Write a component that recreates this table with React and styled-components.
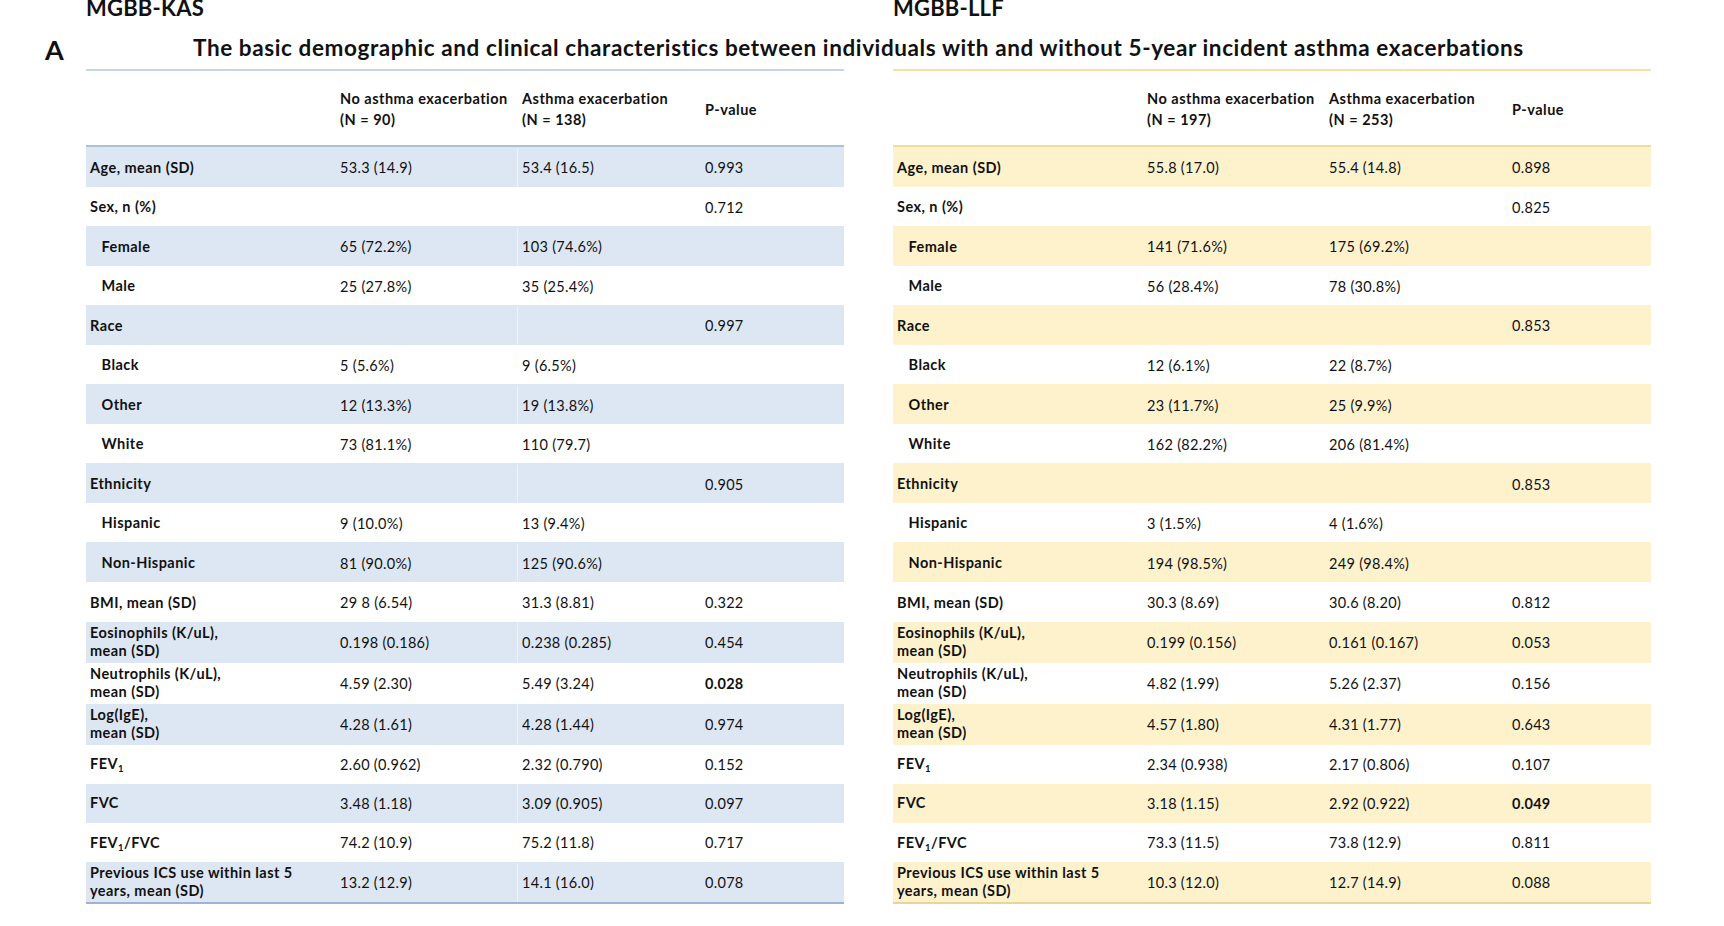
import React from 'react';
import styled, { createGlobalStyle } from 'styled-components';

const GlobalStyle = createGlobalStyle`
  html, body {
    margin: 0;
    padding: 0;
    background: #ffffff;
  }
`;

const tones = {
  blue: { band: '#dde7f3', rule: '#c6d5ea', head: '#adc0da', foot: '#9fb4d4', split: '#eef3fa' },
  gold: { band: '#fef2cd', rule: '#f5e2a2', head: '#f2dc98', foot: '#e9d690', split: '#fef2cd' },
};

const Page = styled.div`
  width: 1724px;
  height: 926px;
  overflow: hidden;
  background: #ffffff;
  color: #111111;
  font-family: Lato, "Open Sans", "Liberation Sans", sans-serif;
`;

const Cohorts = styled.div`
  display: grid;
  grid-template-columns: 758px 758px;
  column-gap: 49px;
  padding-left: 86px;
`;

const CohortName = styled.div`
  height: 16px;
  font-size: 22px;
  font-weight: 700;
  line-height: 16px;
  letter-spacing: 0.2px;
`;

const TitleRow = styled.div`
  display: flex;
  align-items: flex-start;
  height: 53px;
  padding: 17px 0 0 45px;
  box-sizing: border-box;
`;

const PanelLetter = styled.div`
  width: 148px;
  padding-top: 2px;
  font-size: 27px;
  font-weight: 700;
  line-height: 30px;
`;

const Title = styled.h1`
  margin: 0;
  font-size: 22.5px;
  font-weight: 700;
  line-height: 30px;
  letter-spacing: 0.6px;
  white-space: nowrap;
`;

const Table = styled.div`
  border-top: 2px solid ${(p) => tones[p.$tone].rule};
  border-bottom: 2px solid ${(p) => tones[p.$tone].foot};
`;

const Row = styled.div`
  display: grid;
  grid-template-columns: 250px 182px 183px 143px;
  align-items: center;
  height: ${(p) => p.$h}px;
  padding-top: ${(p) => p.$pad}px;
  background: ${(p) => (p.$shade ? tones[p.$tone].band : 'transparent')};
  box-sizing: border-box;
`;

const HeadRow = styled(Row)`
  border-bottom: 2px solid ${(p) => tones[p.$tone].head};
`;

const HeadCell = styled.div`
  padding-left: 4px;
  font-size: 14.5px;
  font-weight: 700;
  line-height: 21px;
  letter-spacing: 0.5px;
  white-space: nowrap;
`;

const Label = styled.div`
  padding-left: ${(p) => (p.$indent ? 15.5 : 4)}px;
  font-size: 14.5px;
  font-weight: 700;
  line-height: 18.5px;
  letter-spacing: 0.45px;
  white-space: nowrap;
`;

const Cell = styled.div`
  align-self: stretch;
  display: flex;
  align-items: center;
  padding-left: 4px;
  font-size: 14.5px;
  font-weight: ${(p) => (p.$bold ? 700 : 400)};
  letter-spacing: 0.3px;
  white-space: nowrap;
  border-left: ${(p) => (p.$split ? `1px solid ${tones[p.$tone].split}` : 'none')};
  margin-left: ${(p) => (p.$split ? -1 : 0)}px;
`;

const Sub = styled.sub`
  font-size: 9.5px;
  vertical-align: -3px;
  line-height: 0;
`;

const FEV = () => (
  <>
    FEV<Sub>1</Sub>
  </>
);

// row heights: plain rows, two-line lab rows, lung function rows
const rows = [
  { label: 'Age, mean (SD)', kas: ['53.3 (14.9)', '53.4 (16.5)', '0.993'], llf: ['55.8 (17.0)', '55.4 (14.8)', '0.898'] },
  { label: 'Sex, n (%)', kas: ['', '', '0.712'], llf: ['', '', '0.825'] },
  { label: 'Female', indent: true, kas: ['65 (72.2%)', '103 (74.6%)', ''], llf: ['141 (71.6%)', '175 (69.2%)', ''] },
  { label: 'Male', indent: true, kas: ['25 (27.8%)', '35 (25.4%)', ''], llf: ['56 (28.4%)', '78 (30.8%)', ''] },
  { label: 'Race', kas: ['', '', '0.997'], llf: ['', '', '0.853'] },
  { label: 'Black', indent: true, kas: ['5 (5.6%)', '9 (6.5%)', ''], llf: ['12 (6.1%)', '22 (8.7%)', ''] },
  { label: 'Other', indent: true, kas: ['12 (13.3%)', '19 (13.8%)', ''], llf: ['23 (11.7%)', '25 (9.9%)', ''] },
  { label: 'White', indent: true, kas: ['73 (81.1%)', '110 (79.7)', ''], llf: ['162 (82.2%)', '206 (81.4%)', ''] },
  { label: 'Ethnicity', kas: ['', '', '0.905'], llf: ['', '', '0.853'] },
  { label: 'Hispanic', indent: true, kas: ['9 (10.0%)', '13 (9.4%)', ''], llf: ['3 (1.5%)', '4 (1.6%)', ''] },
  { label: 'Non-Hispanic', indent: true, kas: ['81 (90.0%)', '125 (90.6%)', ''], llf: ['194 (98.5%)', '249 (98.4%)', ''] },
  { label: 'BMI, mean (SD)', kas: ['29 8 (6.54)', '31.3 (8.81)', '0.322'], llf: ['30.3 (8.69)', '30.6 (8.20)', '0.812'] },
  { label: ['Eosinophils (K/uL),', 'mean (SD)'], h: 41, kas: ['0.198 (0.186)', '0.238 (0.285)', '0.454'], llf: ['0.199 (0.156)', '0.161 (0.167)', '0.053'] },
  { label: ['Neutrophils (K/uL),', 'mean (SD)'], h: 41, kas: ['4.59 (2.30)', '5.49 (3.24)', '0.028'], llf: ['4.82 (1.99)', '5.26 (2.37)', '0.156'], kasBold: true },
  { label: ['Log(IgE),', 'mean (SD)'], h: 41, kas: ['4.28 (1.61)', '4.28 (1.44)', '0.974'], llf: ['4.57 (1.80)', '4.31 (1.77)', '0.643'] },
  { label: <FEV />, h: 39.25, kas: ['2.60 (0.962)', '2.32 (0.790)', '0.152'], llf: ['2.34 (0.938)', '2.17 (0.806)', '0.107'] },
  { label: 'FVC', h: 39.25, kas: ['3.48 (1.18)', '3.09 (0.905)', '0.097'], llf: ['3.18 (1.15)', '2.92 (0.922)', '0.049'], llfBold: true },
  { label: <><FEV />/FVC</>, h: 39.25, kas: ['74.2 (10.9)', '75.2 (11.8)', '0.717'], llf: ['73.3 (11.5)', '73.8 (12.9)', '0.811'] },
  { label: ['Previous ICS use within last 5', 'years, mean (SD)'], h: 39.25, kas: ['13.2 (12.9)', '14.1 (16.0)', '0.078'], llf: ['10.3 (12.0)', '12.7 (14.9)', '0.088'] },
];

const renderLabel = (label) =>
  Array.isArray(label) ? (
    <>
      {label[0]}
      <br />
      {label[1]}
    </>
  ) : (
    label
  );

const CohortTable = ({ tone, counts, cohort }) => (
  <Table $tone={tone}>
    <HeadRow $tone={tone} $h={76} $pad={2}>
      <HeadCell />
      <HeadCell>
        No asthma exacerbation
        <br />
        (N = {counts[0]})
      </HeadCell>
      <HeadCell>
        Asthma exacerbation
        <br />
        (N = {counts[1]})
      </HeadCell>
      <HeadCell>P-value</HeadCell>
    </HeadRow>
    {rows.map((row, i) => {
      const values = row[cohort];
      const bold = row[cohort + 'Bold'];
      return (
        <Row key={i} $tone={tone} $shade={i % 2 === 0} $h={row.h || 39.56} $pad={row.h ? 0.6 : 2}>
          <Label $indent={row.indent}>{renderLabel(row.label)}</Label>
          <Cell>{values[0]}</Cell>
          <Cell $tone={tone} $split={i % 2 === 0}>
            {values[1]}
          </Cell>
          <Cell $bold={bold}>{values[2]}</Cell>
        </Row>
      );
    })}
  </Table>
);

const App = () => (
  <Page>
    <GlobalStyle />
    <Cohorts>
      <CohortName>MGBB-KAS</CohortName>
      <CohortName>MGBB-LLF</CohortName>
    </Cohorts>
    <TitleRow>
      <PanelLetter>A</PanelLetter>
      <Title>
        The basic demographic and clinical characteristics between individuals with and without 5-year incident asthma
        exacerbations
      </Title>
    </TitleRow>
    <Cohorts>
      <CohortTable tone="blue" counts={[90, 138]} cohort="kas" />
      <CohortTable tone="gold" counts={[197, 253]} cohort="llf" />
    </Cohorts>
  </Page>
);

export default App;
